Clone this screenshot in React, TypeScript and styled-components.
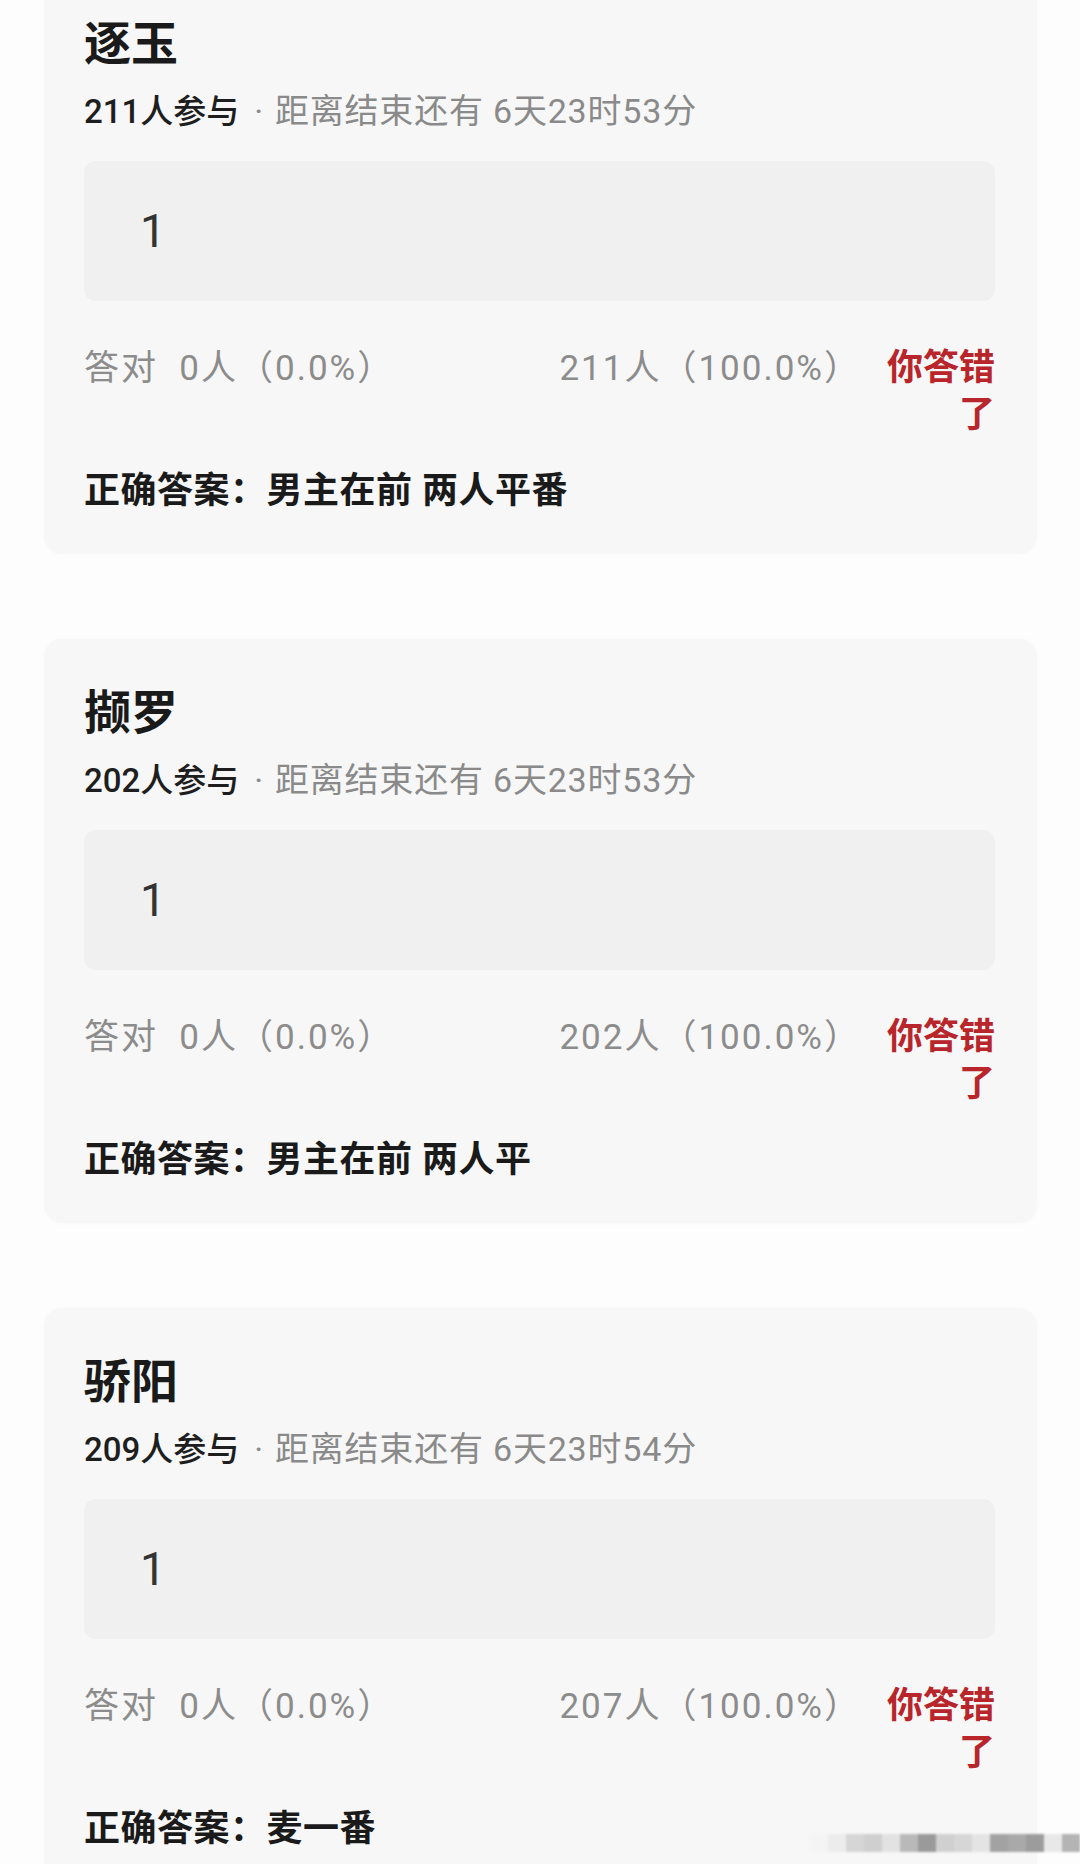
import React from 'react'
import styled, { createGlobalStyle } from 'styled-components'

const GlobalStyle = createGlobalStyle`
  html, body {
    margin: 0;
    padding: 0;
    background: #fdfdfd;
  }
  body {
    font-family: Roboto, "Noto Sans CJK SC", "Noto Sans", sans-serif;
    overflow: hidden;
  }
`

const Page = styled.div`
  position: relative;
  width: 1080px;
  height: 1864px;
  overflow: hidden;
  background: #fdfdfd;
`

const List = styled.div`
  display: flex;
  flex-direction: column;
  gap: 85px;
  padding: 0 43px 0 44px;
  margin-top: -30px;
`

const Card = styled.div`
  background: #f7f7f7;
  border-radius: 18px;
  padding: 40px 42px 40px 40px;
  box-shadow: 0 0 6px rgba(0, 0, 0, 0.02);
`

const Title = styled.div`
  font-family: "Noto Sans CJK SC", sans-serif;
  font-size: 47px;
  line-height: 60px;
  font-weight: 700;
  color: #1a1a1a;
`

const Meta = styled.div`
  margin-top: 19px;
  font-size: 34px;
  line-height: 44px;
  color: #8a8a8a;
  white-space: nowrap;
  letter-spacing: 0.8px;

  b {
    color: #1e1e1e;
    font-weight: 500;
    font-size: 33px;
    letter-spacing: 0;
  }
`

const Dot = styled.span`
  margin: 0 11px 0 15px;
`

const AnswerBox = styled.div`
  margin-top: 27px;
  height: 140px;
  border-radius: 12px;
  background: #f0f0f0;
  display: flex;
  align-items: center;
  padding-left: 56px;
  font-size: 46px;
  color: #333;
`

const Stats = styled.div`
  margin-top: 44px;
  display: grid;
  grid-template-columns: 1fr auto 112px;
  column-gap: 22px;
  align-items: start;
  font-size: 35px;
  line-height: 47px;
`

const StatText = styled.div<{ $pre?: boolean }>`
  color: #8c8c8c;
  letter-spacing: 2px;
  white-space: ${p => (p.$pre ? 'pre' : 'nowrap')};
`

const Wrong = styled.div`
  color: #b8252a;
  font-weight: 700;
  font-size: 36px;
  line-height: 47px;
  text-align: right;
`

const Correct = styled.div`
  margin-top: 29px;
  font-size: 36px;
  line-height: 46px;
  font-weight: 700;
  letter-spacing: 0.5px;
  color: #1a1a1a;
`

const Watermark = styled.div`
  position: absolute;
  right: 0;
  bottom: 12px;
  display: flex;
  filter: blur(1px);
`

const Pixel = styled.div<{ $shade: string }>`
  width: 18px;
  height: 18px;
  background: ${p => p.$shade};
`

interface Quiz {
  title: string
  joined: string
  remain: string
  right: string
  wrong: string
  answer: string
}

const quizzes: Quiz[] = [
  { title: '逐玉', joined: '211人参与', remain: '距离结束还有 6天23时53分', right: '答对  0人（0.0%）', wrong: '211人（100.0%）', answer: '正确答案：男主在前 两人平番' },
  { title: '撷罗', joined: '202人参与', remain: '距离结束还有 6天23时53分', right: '答对  0人（0.0%）', wrong: '202人（100.0%）', answer: '正确答案：男主在前 两人平' },
  { title: '骄阳', joined: '209人参与', remain: '距离结束还有 6天23时54分', right: '答对  0人（0.0%）', wrong: '207人（100.0%）', answer: '正确答案：麦一番' },
]

const shades = ['#f4f4f4', '#ececec', '#d6d6d6', '#cfcfcf', '#e2e2e2', '#b9b9b9', '#9a9a9a', '#d0d0d0', '#d6d6d6', '#e4e4e4', '#a2a2a2', '#a9a9a9', '#9c9c9c', '#e8e8e8', '#b4b4b4']

const App: React.FC = () => (
  <Page>
    <GlobalStyle />
    <List>
      {quizzes.map(q => (
        <Card key={q.title}>
          <Title>{q.title}</Title>
          <Meta>
            <b>{q.joined}</b>
            <Dot>·</Dot>
            {q.remain}
          </Meta>
          <AnswerBox>1</AnswerBox>
          <Stats>
            <StatText $pre>{q.right}</StatText>
            <StatText>{q.wrong}</StatText>
            <Wrong>你答错了</Wrong>
          </Stats>
          <Correct>{q.answer}</Correct>
        </Card>
      ))}
    </List>
    <Watermark>
      {shades.map((s, i) => (
        <Pixel key={i} $shade={s} />
      ))}
    </Watermark>
  </Page>
)

export default App
